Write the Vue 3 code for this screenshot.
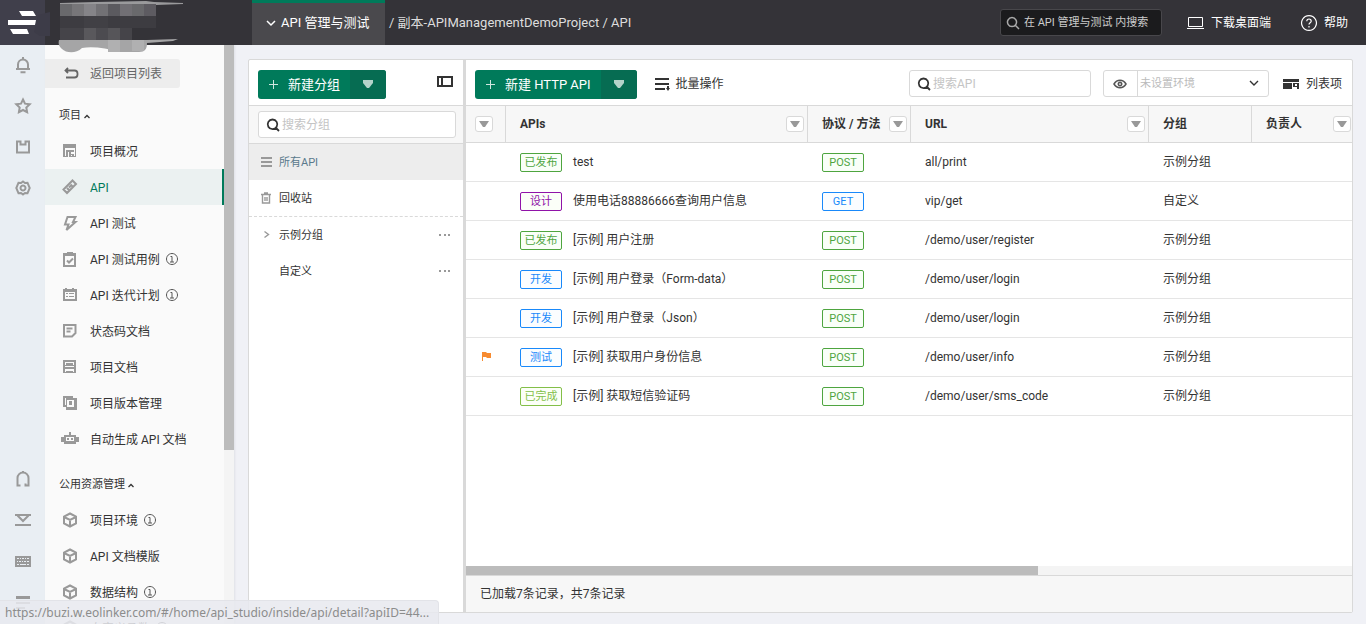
<script setup>
import { ref } from 'vue'

const icons = {
  bell: { s: 'M3 12V7.500a5 5 0 0 1 10 0V12M1 12h14M8 0v3M5.500 15.200h5' },
  star: { s: 'M8 1.500l2 4.200 4.700.6-3.400 3.200.8 4.700L8 12l-4.100 2.200.8-4.700L1.300 6.300 6 5.700z' },
  puzzle: { s: 'M2 2.500h3.500v3h5v-3H14v11H2z' },
  gear: { s: 'M8 1.500l2 1.500 2.500-.2 1 2.400 1.200 2.800-1.200 2.800-1 2.400-2.500-.2-2 1.500-2-1.500-2.500.2-1-2.400L1.300 8l1.200-2.800 1-2.400L6 3z', s2: 'M8 5.500a2.500 2.500 0 1 0 .01 0z' },
  headset: { s: 'M5.500 14.500H2.500V7a5.500 5.500 0 0 1 11 0v7.500H10.500V12.500M8 1.500V0' },
  download: { s: 'M0 3h16M2.500 3.500L8 9l5.500-5.500M0 13h16' },
  keyboard: { f: 'M0 3h16v11H0zM2 5v1h2V5zM5 5v1h1V5zM7 5v1h2V5zM10 5v1h1V5zM12 5v1h2V5zM2 8v1h1V8zM4 8v1h2V8zM7 8v1h1V8zM9 8v1h2V8zM12 8v1h2V8zM2 11v1h2v-1zM5 11v1h6v-1zM12 11v1h2v-1z' },
  menu: { f: 'M1 2h14v3H1zM1 8h14v2H1zM1 13h9v2H1z' },
  overview: { f: 'M1 1h13v13H1zM3 5v8h1V7h8v6h1V5zM6 9v5h1V9zM9 9v2h3V9zM9 12v1h1v-1z' },
  api: { s: 'M10.500 1.500l3.500 3.500-9 9-3.500-3.500zM8.500 5.500l2 2M5 9l2 2M7 8.500l2-2' },
  bolt: { s: 'M5.500 2h8l-2.500 5h2.500L4.500 15l2-5.500H3z' },
  clip: { f: 'M1 2h4V1h6v1h3v14H1zM3 5v9h9V5z', s: 'M5 9.500l2 2 4-4' },
  plan: { f: 'M1 2h2V1h2v1h5V1h2v1h3v12H1zM3 5v7h10V5zM4 6h2v1H4zM7 6h5v1H7zM4 9h2v1H4zM7 9h5v1H7z' },
  note: { s: 'M2 2h11.500v8l-3.500 3.500H2zM4.500 5.500h6M4.500 8.500h4' },
  doc: { f: 'M1 1h13v13H1zM3 3v3h1V4h7v2h1V3zM3 7v1h9V7zM3 10v3h1v-1h7v1h1v-3z' },
  version: { f: 'M1 1h10v2h4v12H4v-3H1zM3 3v7h1V3zM5 5v7h7V5zM7 6h3v4H7z' },
  robot: { f: 'M7 1h2v3h5v2h3v5h-3v2H2v-2h-3V6h3V4h5zM4 6v4h8V6zM5 7h2v2H5zM9 7h2v2H9z' },
  cube: { s: 'M8 1.500l6 3.200v6.600l-6 3.200-6-3.200V4.700zM3 5.500l5 2.500 5-2.500M8 8v6' }
}

const railTop = [
  { icon: 'bell', label: '通知' },
  { icon: 'star', label: '收藏' },
  { icon: 'puzzle', label: '插件' },
  { icon: 'gear', label: '设置' }
]
const railBottom = [
  { icon: 'headset', label: '客服' },
  { icon: 'download', label: '下载' },
  { icon: 'keyboard', label: '快捷键' },
  { icon: 'menu', label: '菜单' }
]

const sections = [
  {
    title: '项目',
    items: [
      { icon: 'overview', text: '项目概况' },
      { icon: 'api', text: 'API', active: true },
      { icon: 'bolt', text: 'API 测试' },
      { icon: 'clip', text: 'API 测试用例', info: true },
      { icon: 'plan', text: 'API 迭代计划', info: true },
      { icon: 'note', text: '状态码文档' },
      { icon: 'doc', text: '项目文档' },
      { icon: 'version', text: '项目版本管理' },
      { icon: 'robot', text: '自动生成 API 文档' }
    ]
  },
  {
    title: '公用资源管理',
    items: [
      { icon: 'cube', text: '项目环境', info: true },
      { icon: 'cube', text: 'API 文档模版' },
      { icon: 'cube', text: '数据结构', info: true },
      { icon: 'cube', text: '自定义函数', info: true }
    ]
  }
]

const rows = [
  { status: '已发布', tone: 'green', name: 'test', method: 'POST', url: 'all/print', group: '示例分组' },
  { status: '设计', tone: 'purple', name: '使用电话88886666查询用户信息', method: 'GET', url: 'vip/get', group: '自定义' },
  { status: '已发布', tone: 'green', name: '[示例] 用户注册', method: 'POST', url: '/demo/user/register', group: '示例分组' },
  { status: '开发', tone: 'blue', name: '[示例] 用户登录（Form-data）', method: 'POST', url: '/demo/user/login', group: '示例分组' },
  { status: '开发', tone: 'blue', name: '[示例] 用户登录（Json）', method: 'POST', url: '/demo/user/login', group: '示例分组' },
  { status: '测试', tone: 'blue', name: '[示例] 获取用户身份信息', method: 'POST', url: '/demo/user/info', group: '示例分组', flag: true },
  { status: '已完成', tone: 'lime', name: '[示例] 获取短信验证码', method: 'POST', url: '/demo/user/sms_code', group: '示例分组' }
]

const columns = [
  { key: 'pick', label: '', filter: true },
  { key: 'name', label: 'APIs', filter: true },
  { key: 'method', label: '协议 / 方法', filter: true },
  { key: 'url', label: 'URL', filter: true },
  { key: 'group', label: '分组', filter: false },
  { key: 'owner', label: '负责人', filter: true }
]

const globalSearch = ref('')
const groupSearch = ref('')
const apiSearch = ref('')
const env = ref('')
</script>

<template>
  <div class="app">
    <header class="top">
      <div class="brand">
        <svg class="logo" width="45" height="45" viewBox="0 0 45 45" aria-hidden="true">
          <path d="M19 11h14l3 5H22zM8 20h28l-1 5H8zM10 29h17l2 5H13z" fill="#fff" />
        </svg>
      </div>
      <svg class="mask" width="150" height="56" viewBox="0 0 150 56" aria-hidden="true">
        <path d="M0 15l12-3v24H2L-4 32z" fill="#3d3c48" />
        <path d="M22 3l35-1 51-1 8 1 29 1v1l-27 1H22z" fill="#9a9a9c" />
        <path d="M22 4h96v12H22z" fill="#69696c" />
        <path d="M34 4h12v12H34z" fill="#777679" />
        <path d="M46 4h12v12H46z" fill="#858488" />
        <path d="M58 4h12v12H58z" fill="#727175" />
        <path d="M70 4h12v12H70z" fill="#5b5a5f" />
        <path d="M82 4h12v12H82z" fill="#716f74" />
        <path d="M106 4h12v12h-12z" fill="#5d5b61" />
        <path d="M22 16h96v12H22z" fill="#3d3c41" />
        <path d="M46 16h24v12H46z" fill="#414045" />
        <path d="M22 28h72v12H22z" fill="#454449" />
        <path d="M46 28h12v12H46z" fill="#59585c" />
        <path d="M58 28h12v12H58z" fill="#4c4b50" />
        <path d="M70 28h12v12H70z" fill="#565559" />
        <path d="M21 40h88l31-1-5 2-26 2c0 6-2 9-8 9H82c-14-4-28-6-38-4-6 6-16 5-20 1-3-3-4-5-3-9z" fill="#a5a5a6" />
        <path d="M70 40h12v12H70zM94 40h12v11H94z" fill="#b0b0b1" />
      </svg>
      <button class="workspace" type="button">
        <svg width="10" height="8" viewBox="0 0 10 8" aria-hidden="true"><path d="M1 2l4 4 4-4" fill="none" stroke="#fff" stroke-width="1.500" /></svg>
        <span>API 管理与测试</span>
      </button>
      <nav class="crumbs">/ <a href="#project">副本-APIManagementDemoProject</a> / <a href="#api">API</a></nav>
      <div class="top-right">
        <label class="global-search">
          <svg width="14" height="14" viewBox="0 0 14 14" aria-hidden="true"><path d="M6 1.500a4.500 4.500 0 1 0 .01 0zM9.500 9.500l3.500 3.500" fill="none" stroke="#aaa" stroke-width="1.500" /></svg>
          <input v-model="globalSearch" type="text" placeholder="在 API 管理与测试 内搜索" aria-label="全局搜索" />
        </label>
        <a class="top-link desktop" href="#desktop">
          <svg width="17" height="14" viewBox="0 0 17 14" aria-hidden="true"><path d="M1.500 1.500h14v9h-14zM0 12.500h17" fill="none" stroke="#fff" /></svg>
          下载桌面端
        </a>
        <a class="top-link help" href="#help">
          <svg width="16" height="16" viewBox="0 0 16 16" aria-hidden="true"><path d="M8 .6a7.400 7.400 0 1 0 .01 0zM5.800 6.200c0-3 4.400-2.800 4.400 0C10.200 8 8 7.600 8 9.600M8 11v1.500" fill="none" stroke="#fff" stroke-width="1.200" /></svg>
          帮助
        </a>
      </div>
    </header>

    <div class="body">
      <aside class="rail">
        <div v-for="(list, n) in [railTop, railBottom]" :key="n" class="rail-group">
          <button v-for="item in list" :key="item.icon" type="button" :aria-label="item.label">
            <svg class="ico" width="16" height="16" viewBox="0 0 16 16">
              <path v-if="icons[item.icon].f" class="fill" :d="icons[item.icon].f" />
              <path v-if="icons[item.icon].s" class="line" :d="icons[item.icon].s" />
              <path v-if="icons[item.icon].s2" class="line" :d="icons[item.icon].s2" />
            </svg>
          </button>
        </div>
      </aside>

      <aside class="side">
        <nav class="side-nav">
          <button class="back" type="button">
            <svg width="16" height="14" viewBox="0 0 16 14" aria-hidden="true"><path d="M5 1L2.500 3.500 5 6M3 3.500h8.500a3 3 0 0 1 3 3v1a3 3 0 0 1-3 3H3" fill="none" stroke="#666" stroke-width="1.800" /></svg>
            返回项目列表
          </button>
          <section v-for="sec in sections" :key="sec.title">
            <h2>{{ sec.title }}<svg width="6" height="5" viewBox="0 0 6 5" aria-hidden="true"><path d="M.5 4L3 1.500 5.500 4" fill="none" stroke="#333" stroke-width="1.300" /></svg></h2>
            <a v-for="item in sec.items" :key="item.text" href="#nav" class="nav-item" :class="{ active: item.active }">
              <svg class="ico" width="16" height="16" viewBox="0 0 16 16" aria-hidden="true">
                <path v-if="icons[item.icon].f" class="fill" :d="icons[item.icon].f" />
                <path v-if="icons[item.icon].s" class="line" :d="icons[item.icon].s" />
              </svg>
              <span>{{ item.text }}</span>
              <svg v-if="item.info" class="info" width="12" height="12" viewBox="0 0 12 12" aria-hidden="true"><path d="M6 .5a5.500 5.500 0 1 0 .01 0zM4.500 3.500H6V9M4 9h4" fill="none" stroke="#555" /></svg>
            </a>
          </section>
        </nav>
        <div class="v-track"><div class="v-thumb"></div></div>
      </aside>

      <main class="main">
        <div class="panel">
          <section class="groups">
            <div class="toolbar">
              <div class="split">
                <button class="primary" type="button"><svg width="11" height="11" viewBox="0 0 11 11" aria-hidden="true"><path d="M5.500 1v9M1 5.500h9" stroke="#cfe6df" /></svg>新建分组</button>
                <button class="more" type="button" aria-label="更多新建分组方式"><svg width="12" height="9" viewBox="0 0 12 9" aria-hidden="true"><path d="M1 0h10v3L7 8H5L1 3z" fill="#b4d3ca" /></svg></button>
              </div>
              <button class="collapse" type="button" aria-label="收起分组">
                <svg width="16" height="12" viewBox="0 0 16 12"><path d="M1 1h14v9H1zM5 1v9" fill="none" stroke="#333" stroke-width="2" /></svg>
              </button>
            </div>
            <div class="group-search">
              <label class="field">
                <svg width="14" height="14" viewBox="0 0 14 14" aria-hidden="true"><path d="M6.500 1.500a4.800 4.800 0 1 0 .01 0zM10 10l3 3" fill="none" stroke="#333" stroke-width="1.800" /></svg>
                <input v-model="groupSearch" type="text" placeholder="搜索分组" aria-label="搜索分组" />
              </label>
            </div>
            <ul class="tree">
              <li class="current">
                <svg width="12" height="12" viewBox="0 0 12 12" aria-hidden="true"><path d="M0 2h11M0 6h11M0 10h11" stroke="#999" stroke-width="2" /></svg>
                <a href="#all">所有API</a>
              </li>
              <li class="trash">
                <svg width="12" height="12" viewBox="0 0 12 12" aria-hidden="true"><path d="M0 2.500h10M3 1h4M1.500 3v8h7V3M4 5v4M6 5v4" fill="none" stroke="#999" stroke-width="1.400" /></svg>
                <a href="#trash">回收站</a>
              </li>
              <li>
                <svg width="12" height="12" viewBox="0 0 12 12" aria-hidden="true"><path d="M3.500 2.500l4 3-4 3" fill="none" stroke="#999" stroke-width="1.400" /></svg>
                <a href="#sample">示例分组</a>
                <button type="button" aria-label="更多操作"><svg width="12" height="2" viewBox="0 0 12 2"><path d="M0 1h2M5 1h2M9 1h2" stroke="#999" stroke-width="2" /></svg></button>
              </li>
              <li>
                <span class="blank"></span>
                <a href="#custom">自定义</a>
                <button type="button" aria-label="更多操作"><svg width="12" height="2" viewBox="0 0 12 2"><path d="M0 1h2M5 1h2M9 1h2" stroke="#999" stroke-width="2" /></svg></button>
              </li>
            </ul>
          </section>

          <section class="apis">
            <div class="toolbar">
              <div class="split">
                <button class="primary" type="button"><svg width="11" height="11" viewBox="0 0 11 11" aria-hidden="true"><path d="M5.500 1v9M1 5.500h9" stroke="#cfe6df" /></svg>新建 HTTP API</button>
                <button class="more" type="button" aria-label="更多新建方式"><svg width="12" height="9" viewBox="0 0 12 9" aria-hidden="true"><path d="M1 0h10v3L7 8H5L1 3z" fill="#b4d3ca" /></svg></button>
              </div>
              <button class="plain batch" type="button">
                <svg width="15" height="14" viewBox="0 0 15 14" aria-hidden="true"><path d="M0 2h14M0 7h14M0 12h10" stroke="#333" stroke-width="2" /><path d="M12 9h2v2h1l-2 3-2-3h1z" fill="#333" /></svg>
                批量操作
              </button>
              <label class="field api-search">
                <svg width="14" height="14" viewBox="0 0 14 14" aria-hidden="true"><path d="M6.500 1.500a4.800 4.800 0 1 0 .01 0zM10 10l3 3" fill="none" stroke="#333" stroke-width="1.800" /></svg>
                <input v-model="apiSearch" type="text" placeholder="搜索API" aria-label="搜索API" />
              </label>
              <div class="field env">
                <button class="eye" type="button" aria-label="查看环境">
                  <svg width="14" height="10" viewBox="0 0 14 10"><path d="M1 5c3-5 9-5 12 0-3 5-9 5-12 0z" fill="none" stroke="#555" stroke-width="1.500" /><path d="M7 2.500a2.500 2.500 0 1 0 .01 0z" fill="#555" /><path d="M7 4.200a.8.8 0 1 0 .01 0z" fill="#fff" /></svg>
                </button>
                <select v-model="env" aria-label="环境">
                  <option value="">未设置环境</option>
                </select>
                <svg class="caret" width="10" height="7" viewBox="0 0 10 7" aria-hidden="true"><path d="M1 1l4 4 4-4" fill="none" stroke="#333" stroke-width="1.400" /></svg>
              </div>
              <button class="plain cols" type="button">
                <svg width="17" height="12" viewBox="0 0 17 12" aria-hidden="true"><path d="M0 1h16v3H0zM0 5h9v6H0zM10 5h6v6h-2V9h-4zM12 6v2h2V6z" fill="#333" fill-rule="evenodd" /></svg>
                列表项
              </button>
            </div>

            <div class="table-wrap">
              <table>
                <colgroup>
                  <col v-for="c in columns" :key="c.key" :class="'c-' + c.key" />
                </colgroup>
                <thead>
                  <tr>
                    <th v-for="c in columns" :key="c.key" scope="col">
                      <div class="th" :class="{ center: !c.label }">
                        <span v-if="c.label">{{ c.label }}</span>
                        <button v-if="c.filter" class="filter" type="button" aria-label="筛选">
                          <svg width="10" height="6" viewBox="0 0 10 6"><path d="M0 0h10L6 6H4z" fill="#999" /></svg>
                        </button>
                      </div>
                    </th>
                  </tr>
                </thead>
                <tbody>
                  <tr v-for="r in rows" :key="r.name">
                    <td class="flag-cell">
                      <svg v-if="r.flag" width="10" height="10" viewBox="0 0 10 10" role="img" aria-label="标记"><path d="M0 0h4l1 1h4v5H5L4 5H1v4H0z" fill="#f78b30" /></svg>
                    </td>
                    <td><div class="name"><span class="tag" :class="r.tone">{{ r.status }}</span><span>{{ r.name }}</span></div></td>
                    <td><div class="name"><span class="tag method" :class="r.method === 'GET' ? 'blue' : 'green'">{{ r.method }}</span></div></td>
                    <td>{{ r.url }}</td>
                    <td>{{ r.group }}</td>
                    <td></td>
                  </tr>
                </tbody>
              </table>
            </div>
            <div class="h-track"><div class="h-thumb"></div></div>
            <footer class="count">已加载7条记录，共7条记录</footer>
          </section>
        </div>
      </main>
    </div>

    <div class="status-url">https://buzi.w.eolinker.com/#/home/api_studio/inside/api/detail?apiID=44...</div>
  </div>
</template>

<style>
body {
  background: #f0f1f6;
}
</style>

<style scoped>
.app {
  position: relative;
  display: flex;
  flex-direction: column;
  height: 100vh;
  overflow: hidden;
  font-family: Roboto, "Noto Sans CJK SC", sans-serif;
  font-size: 12px;
  line-height: 18px;
  color: #333;
}
.app * {
  box-sizing: border-box;
}
button, input, select {
  margin: 0;
  padding: 0;
  border: 0;
  background: none;
  font: inherit;
  color: inherit;
  outline: none;
}
a {
  color: inherit;
  text-decoration: none;
}
svg {
  display: block;
  flex: none;
  overflow: visible;
}
.top {
  position: relative;
  display: flex;
  flex: none;
  height: 45px;
  background: #343338;
  color: #fff;
}
.brand {
  width: 252px;
  flex: none;
}
.logo {
  background: #403f4b;
}
.mask {
  position: absolute;
  z-index: 2;
  left: 38px;
  top: 0;
}
.workspace {
  display: flex;
  align-items: center;
  gap: 5px;
  width: 133px;
  padding: 0 0 3px 14px;
  border-top: 3px solid #007a5a;
  background: #4a494d;
  font-size: 13px;
  white-space: nowrap;
}
.crumbs {
  padding-left: 4px;
  line-height: 45px;
  font-size: 13px;
  color: #ddd;
  white-space: nowrap;
}
.top-right {
  display: flex;
  align-items: center;
  margin-left: auto;
  padding-right: 18px;
}
.global-search {
  display: flex;
  align-items: center;
  gap: 4px;
  width: 162px;
  height: 27px;
  padding-left: 5px;
  border: 1px solid #48474b;
  border-radius: 3px;
  background: #1b1b1d;
}
.global-search input {
  flex: 1;
  min-width: 0;
  font-size: 11px;
}
.global-search input::placeholder {
  color: #ccc;
  opacity: 1;
}
.top-link {
  display: flex;
  align-items: center;
  gap: 7px;
}
.desktop {
  margin-left: 25px;
}
.help {
  margin-left: 30px;
}
.body {
  display: flex;
  flex: 1;
  min-height: 0;
}
.rail {
  display: flex;
  flex-direction: column;
  justify-content: space-between;
  flex: none;
  width: 45px;
  padding-bottom: 2px;
  background: #e9eef3;
}
.rail-group {
  display: grid;
  gap: 1px;
}
.rail button {
  display: grid;
  place-items: center;
  height: 40px;
}
.ico .fill {
  fill: #999;
  fill-rule: evenodd;
}
.ico .line {
  fill: none;
  stroke: #999;
  stroke-width: 2;
}
.side {
  display: flex;
  flex: none;
  width: 189px;
  background: #fafafa;
  box-shadow: 1px 0 2px #dfe0e6;
}
.side-nav {
  flex: 1;
  padding-top: 14px;
  overflow: hidden;
}
.back {
  display: flex;
  align-items: center;
  gap: 11px;
  width: 135px;
  height: 29px;
  padding-left: 18px;
  border-radius: 0 3px 3px 0;
  background: #ededed;
  color: #666;
}
.side h2 {
  display: flex;
  align-items: center;
  gap: 3px;
  height: 36px;
  margin: 9px 0 0;
  padding: 2px 0 0 14px;
  font-size: 11px;
  font-weight: 400;
}
.nav-item {
  display: flex;
  align-items: center;
  height: 36px;
  padding-left: 17px;
  border-right: 2px solid transparent;
}
.nav-item span {
  margin-left: 12px;
  padding-top: 2px;
}
.nav-item.active {
  border-right-color: #007a5a;
  background: #ebf1f1;
  color: #007a5a;
}
.info {
  margin-left: 6px;
}
.v-track {
  flex: none;
  width: 10px;
  background: #f4f4f4;
}
.v-thumb {
  height: 70%;
  background: #bcbcbc;
}
.main {
  flex: 1;
  min-width: 0;
  padding: 14px 13px 11px 14px;
  border-top: 1px solid #dcdde1;
  margin-top: -1px;
}
.panel {
  display: flex;
  height: 100%;
  border: 1px solid #d9d9d9;
  border-radius: 2px;
  background: #fff;
}
.groups {
  flex: none;
  width: 217px;
  border-right: 3px solid #d9d9d9;
}
.apis {
  display: flex;
  flex-direction: column;
  flex: 1;
  min-width: 0;
}
.toolbar {
  display: flex;
  align-items: flex-start;
  flex: none;
  height: 46px;
  padding: 10px 9px 0;
  border-bottom: 1px solid #d9d9d9;
}
.split {
  display: flex;
  height: 29px;
  border-radius: 3px;
  background: #007a5a;
  overflow: hidden;
  color: #fff;
  font-size: 13px;
  white-space: nowrap;
}
.primary {
  display: flex;
  align-items: center;
  gap: 9px;
  padding: 0 10px;
}
.more {
  display: grid;
  place-items: center;
  width: 36px;
  background: #066c52;
}
.collapse {
  margin: 6px 1px 0 auto;
}
.group-search {
  padding: 5px 7px 5px 9px;
  border-bottom: 1px solid #d9d9d9;
  background: #f7f7f7;
}
.field {
  display: flex;
  align-items: center;
  gap: 2px;
  height: 27px;
  padding-left: 7px;
  border: 1px solid #d9d9d9;
  border-radius: 3px;
  background: #fff;
}
.field input {
  flex: 1;
  min-width: 0;
}
.field input::placeholder {
  color: #c4c4c4;
  opacity: 1;
}
.tree {
  margin: 0;
  padding: 0;
  list-style: none;
  font-size: 11px;
}
.tree li {
  display: flex;
  align-items: center;
  gap: 6px;
  height: 36px;
  padding: 0 12px;
}
.tree a {
  padding-top: 2px;
}
.tree .blank {
  width: 12px;
}
.tree button {
  margin-left: auto;
}
.tree .current {
  background: #ededed;
  color: #5a7a8c;
}
.tree .trash {
  height: 37px;
  border-bottom: 1px dashed #d9d9d9;
}
.plain {
  display: flex;
  align-items: center;
  gap: 6px;
  height: 27px;
  white-space: nowrap;
}
.batch {
  margin-left: 18px;
}
.api-search {
  width: 182px;
  margin-left: auto;
}
.env {
  width: 166px;
  margin-left: 12px;
  padding: 0 9px 0 0;
  gap: 0;
}
.eye {
  display: grid;
  place-items: center;
  width: 34px;
  height: 25px;
  border-right: 1px solid #d9d9d9;
}
.env select {
  flex: 1;
  min-width: 0;
  padding-left: 2px;
  appearance: none;
  font-size: 11px;
  color: #bbb;
}
.cols {
  margin: 0 1px 0 14px;
}
.table-wrap {
  flex: 1;
  min-height: 0;
  overflow: hidden;
}
table {
  width: 100%;
  table-layout: fixed;
  border-spacing: 0;
}
.c-pick {
  width: 40px;
}
.c-method, .c-group {
  width: 103px;
}
.c-url {
  width: 238px;
}
.c-owner {
  width: 100px;
}
th {
  height: 37px;
  padding: 0;
  border-right: 1px solid #d9d9d9;
  border-bottom: 1px solid #d9d9d9;
  background: #f7f7f7;
  text-align: left;
}
th:last-child {
  border-right: 0;
}
.th {
  display: flex;
  align-items: center;
  justify-content: space-between;
  padding: 0 3px 0 14px;
  white-space: nowrap;
}
.th.center {
  padding: 0 12px 0 9px;
}
th:last-child .th {
  padding-right: 1px;
}
.filter {
  display: grid;
  place-items: center;
  width: 18px;
  height: 16px;
  border: 1px solid #d9d9d9;
  border-radius: 3px;
  background: #fff;
}
td {
  height: 39px;
  padding: 0 0 0 14px;
  border-bottom: 1px solid #e5e5e5;
  white-space: nowrap;
}
.flag-cell {
  padding-left: 16px;
}
.name {
  display: flex;
  align-items: center;
  gap: 11px;
}
.tag {
  width: 42px;
  height: 19px;
  border: 1px solid;
  border-radius: 2px;
  line-height: 17px;
  font-size: 11px;
  text-align: center;
}
.green {
  color: #4ea53f;
  background: #f9fff8;
}
.purple {
  color: #9013a8;
  background: #fbfff8;
}
.blue {
  color: #1989fa;
  background: #fbfdff;
}
.lime {
  color: #83bf48;
  background: #fcfff8;
}
.h-track {
  flex: none;
  height: 9px;
  background: #f4f4f4;
}
.h-thumb {
  width: 64.600%;
  height: 9px;
  background: #bcbcbc;
}
.count {
  flex: none;
  height: 37px;
  padding-left: 14px;
  border-top: 1px solid #d9d9d9;
  background: #f7f7f7;
  line-height: 36px;
}
.status-url {
  position: absolute;
  left: 0;
  bottom: 0;
  height: 24px;
  padding: 0 9px 0 5px;
  border: 1px solid #e2e3e8;
  border-left: 0;
  border-bottom: 0;
  border-radius: 0 4px 0 0;
  background: rgba(232, 233, 238, 0.85);
  font-family: "Noto Sans", sans-serif;
  font-size: 12px;
  line-height: 24px;
  color: #8c8c8c;
}
</style>
